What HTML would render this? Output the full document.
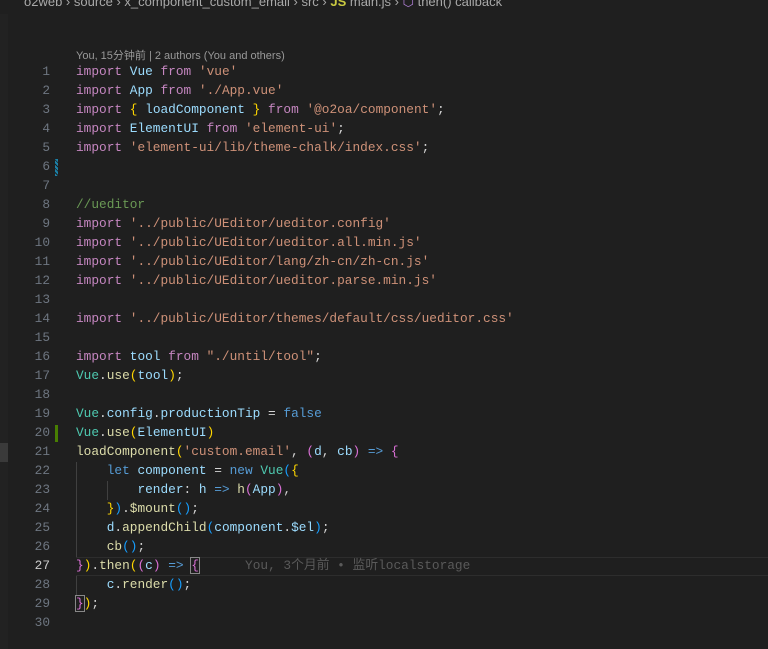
<!DOCTYPE html>
<html><head><meta charset="utf-8"><style>
html,body{margin:0;padding:0;width:768px;height:649px;overflow:hidden;background:#1f1f1f}
body{position:relative;font-family:"Liberation Mono",monospace;font-size:12.8px}
.bc{position:absolute;left:24px;top:-6px;font-family:"Liberation Sans",sans-serif;font-size:13px;color:#a9a9a9;white-space:pre}
.gut{position:absolute;left:0;top:14px;width:8px;height:635px;background:#222}
.ln{position:absolute;left:0;width:50px;text-align:right;color:#6e7681;height:19px;line-height:19px}
.cd{position:absolute;left:76px;height:19px;line-height:19px;white-space:pre;color:#d4d4d4}
.k{color:#c586c0}.v{color:#9cdcfe}.s{color:#ce9178}.c{color:#4ec9b0}.y{color:#ffd700}.p{color:#da70d6}.b{color:#179fff}.cm{color:#6a9955}.kw{color:#569cd6}.f{color:#dcdcaa}
.lens{position:absolute;left:76px;top:47px;font-family:"Liberation Sans","Noto Sans CJK SC",sans-serif;font-size:11px;color:#999}
.guide{position:absolute;width:1px;background:#404040}
</style></head><body>
<div class="bc">o2web › source › x_component_custom_email › src › <span style="color:#cbcb41;font-weight:bold">JS</span> main.js › <span style="color:#b180d7">⬡</span> then() callback</div>
<div class="gut"></div>
<div style="position:absolute;left:0;top:443px;width:8px;height:19px;background:#3a3a3a"></div>
<div style="position:absolute;left:55px;top:425px;width:3px;height:17px;background:#487e02"></div>
<div style="position:absolute;left:55px;top:159px;width:3px;height:17px;background:repeating-linear-gradient(45deg,#1b81a8 0 2px,#1f1f1f 2px 3px)"></div>
<div style="position:absolute;left:76px;top:557px;width:692px;height:17px;border-top:1px solid #2d2d2d;border-bottom:1px solid #2d2d2d"></div>
<div class="lens">You, 15分钟前 | 2 authors (You and others)</div>
<div class="guide" style="left:76px;top:462px;height:95px"></div>
<div class="guide" style="left:107px;top:481px;height:19px"></div>
<div class="guide" style="left:76px;top:576px;height:19px"></div>
<div id="c"></div>
<script>
var L=[
'<span class="k">import</span> <span class="v">Vue</span> <span class="k">from</span> <span class="s">\'vue\'</span>',
'<span class="k">import</span> <span class="v">App</span> <span class="k">from</span> <span class="s">\'./App.vue\'</span>',
'<span class="k">import</span> <span class="y">{</span> <span class="v">loadComponent</span> <span class="y">}</span> <span class="k">from</span> <span class="s">\'@o2oa/component\'</span>;',
'<span class="k">import</span> <span class="v">ElementUI</span> <span class="k">from</span> <span class="s">\'element-ui\'</span>;',
'<span class="k">import</span> <span class="s">\'element-ui/lib/theme-chalk/index.css\'</span>;',
'','',
'<span class="cm">//ueditor</span>',
'<span class="k">import</span> <span class="s">\'../public/UEditor/ueditor.config\'</span>',
'<span class="k">import</span> <span class="s">\'../public/UEditor/ueditor.all.min.js\'</span>',
'<span class="k">import</span> <span class="s">\'../public/UEditor/lang/zh-cn/zh-cn.js\'</span>',
'<span class="k">import</span> <span class="s">\'../public/UEditor/ueditor.parse.min.js\'</span>',
'',
'<span class="k">import</span> <span class="s">\'../public/UEditor/themes/default/css/ueditor.css\'</span>',
'',
'<span class="k">import</span> <span class="v">tool</span> <span class="k">from</span> <span class="s">"./until/tool"</span>;',
'<span class="c">Vue</span>.<span class="f">use</span><span class="y">(</span><span class="v">tool</span><span class="y">)</span>;',
'',
'<span class="c">Vue</span>.<span class="v">config</span>.<span class="v">productionTip</span> = <span class="kw">false</span>',
'<span class="c">Vue</span>.<span class="f">use</span><span class="y">(</span><span class="v">ElementUI</span><span class="y">)</span>',
'<span class="f">loadComponent</span><span class="y">(</span><span class="s">\'custom.email\'</span>, <span class="p">(</span><span class="v">d</span>, <span class="v">cb</span><span class="p">)</span> <span class="kw">=&gt;</span> <span class="p">{</span>',
'    <span class="kw">let</span> <span class="v">component</span> = <span class="kw">new</span> <span class="c">Vue</span><span class="b">(</span><span class="y">{</span>',
'        <span class="v">render</span>: <span class="v">h</span> <span class="kw">=&gt;</span> <span class="f">h</span><span class="p">(</span><span class="v">App</span><span class="p">)</span>,',
'    <span class="y">}</span><span class="b">)</span>.<span class="f">$mount</span><span class="b">()</span>;',
'    <span class="v">d</span>.<span class="f">appendChild</span><span class="b">(</span><span class="v">component</span>.<span class="v">$el</span><span class="b">)</span>;',
'    <span class="f">cb</span><span class="b">()</span>;',
'<span class="p">}</span><span class="y">)</span>.<span class="f">then</span><span class="y">(</span><span class="p">(</span><span class="v">c</span><span class="p">)</span> <span class="kw">=&gt;</span> <span class="p" style="outline:1px solid #888">{</span>      <span style="color:#5a5a5a;font-family:\'Liberation Mono\',\'Noto Sans CJK SC\',monospace">You, 3个月前 • 监听localstorage</span>',
'    <span class="v">c</span>.<span class="f">render</span><span class="b">()</span>;',
'<span class="p" style="outline:1px solid #888">}</span><span class="y">)</span>;',
''];
var h='';
for(var i=0;i<30;i++){var t=62+i*19;h+='<div class="ln" style="top:'+t+'px;'+(i==26?'color:#ccc':'')+'">'+(i+1)+'</div><div class="cd" style="top:'+t+'px">'+L[i]+'</div>';}
document.getElementById('c').innerHTML=h;
</script>
</body></html>
